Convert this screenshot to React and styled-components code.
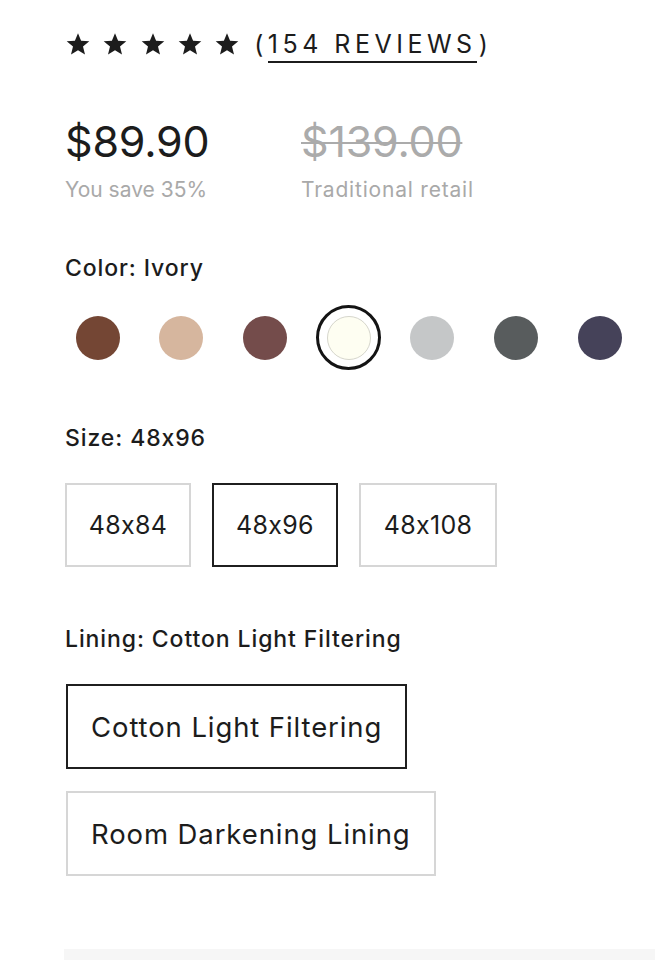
import React from "react";
import styled, { createGlobalStyle } from "styled-components";

const Global = createGlobalStyle`
  html, body { margin: 0; padding: 0; background: #fff; }
  body {
    font-family: "Inter", "Liberation Sans", sans-serif;
    font-feature-settings: "calt" 0;
    color: #1c1c1c;
  }
  * { box-sizing: border-box; }
`;

const Page = styled.div`
  width: 655px;
  height: 960px;
  overflow: hidden;
  padding: 30px 0 0 65px;
  display: flex;
  flex-direction: column;
`;

const RatingRow = styled.div`
  display: flex;
  align-items: flex-start;
`;

const Stars = styled.div`
  display: flex;
  gap: 13.3px;
  margin: 2px 0 0 1px;
`;

const Reviews = styled.div`
  margin: 1.5px 0 0 15px;
  font-size: 25px;
  line-height: 25px;
  letter-spacing: 4.5px;
  color: #1c1c1c;
  display: flex;
  align-items: flex-start;
`;

const ReviewsLink = styled.span`
  display: inline-block;
  border-bottom: 2px solid #1c1c1c;
  padding-bottom: 4.5px;
  margin-right: 2px;
`;

const PriceRow = styled.div`
  display: flex;
  margin-top: 53px;
`;

const PriceCol = styled.div`
  display: flex;
  flex-direction: column;
  width: ${(p) => p.$w}px;
`;

const Price = styled.div`
  font-size: 43px;
  line-height: 50px;
  letter-spacing: -0.2px;
  color: ${(p) => (p.$old ? "#ababab" : "#1c1c1c")};
  text-decoration: ${(p) => (p.$old ? "line-through" : "none")};
  text-decoration-thickness: 2px;
`;

const PriceNote = styled.div`
  font-size: 21px;
  line-height: 24px;
  letter-spacing: ${(p) => p.$ls}px;
  margin-top: 12px;
  color: #a9a9a9;
`;

const Label = styled.div`
  font-size: 23px;
  font-weight: 500;
  line-height: 28px;
  letter-spacing: 0.9px;
  color: #1c1c1c;
  margin-top: ${(p) => p.$mt}px;
`;

const Swatches = styled.div`
  display: flex;
  align-items: center;
  gap: 18.7px;
  margin-top: 23px;
`;

const SwatchRing = styled.div`
  width: 65px;
  height: 65px;
  border-radius: 50%;
  border: 3px solid ${(p) => (p.$selected ? "#141414" : "transparent")};
  display: flex;
  align-items: center;
  justify-content: center;
`;

const SwatchDot = styled.div`
  width: 44px;
  height: 44px;
  border-radius: 50%;
  background: ${(p) => p.$color};
  border: ${(p) => (p.$outlined ? "1px solid #d6d6cc" : "none")};
`;

const OptionRow = styled.div`
  display: flex;
  gap: 21px;
  margin-top: 31px;
`;

const OptionCol = styled.div`
  display: flex;
  flex-direction: column;
  align-items: flex-start;
  gap: 22px;
  margin-top: 31px;
  margin-left: 1px;
`;

const Option = styled.div`
  width: ${(p) => (p.$w ? `${p.$w}px` : "auto")};
  height: ${(p) => p.$h}px;
  padding: 0 ${(p) => p.$px}px;
  border: 2px solid ${(p) => (p.$selected ? "#1f1f1f" : "#d6d6d6")};
  display: flex;
  align-items: center;
  justify-content: center;
  font-size: ${(p) => p.$fs}px;
  letter-spacing: ${(p) => p.$ls}px;
  color: #1c1c1c;
`;

const BottomPanel = styled.div`
  margin-top: auto;
  margin-left: -1px;
  height: 11px;
  background: #f6f6f6;
`;

const Star = () => (
  <svg width="24" height="24" viewBox="0 0 24 24">
    <path
      d="M12 1.2l3.1 7.6 8.2.5-6.3 5.3 2 8-7-4.4-7 4.4 2-8L.7 9.3l8.2-.5z"
      fill="#1c1c1c"
    />
  </svg>
);

const colors = [
  "#744634",
  "#d6b69e",
  "#744c4b",
  "#fefef2",
  "#c5c7c8",
  "#585c5d",
  "#454259",
];

const sizes = [
  { label: "48x84", w: 126 },
  { label: "48x96", w: 126, selected: true },
  { label: "48x108", w: 138 },
];

const linings = [
  { label: "Cotton Light Filtering", selected: true },
  { label: "Room Darkening Lining" },
];

export default function App() {
  return (
    <>
      <Global />
      <Page>
        <RatingRow>
          <Stars>
            {[0, 1, 2, 3, 4].map((i) => (
              <Star key={i} />
            ))}
          </Stars>
          <Reviews>
            (<ReviewsLink>154 REVIEWS</ReviewsLink>)
          </Reviews>
        </RatingRow>

        <PriceRow>
          <PriceCol $w={236}>
            <Price>$89.90</Price>
            <PriceNote $ls={0}>You save 35%</PriceNote>
          </PriceCol>
          <PriceCol $w={220}>
            <Price $old>$139.00</Price>
            <PriceNote $ls={0.8}>Traditional retail</PriceNote>
          </PriceCol>
        </PriceRow>

        <Label $mt={52}>Color: Ivory</Label>
        <Swatches>
          {colors.map((c, i) => (
            <SwatchRing key={c} $selected={i === 3}>
              <SwatchDot $color={c} $outlined={i === 3} />
            </SwatchRing>
          ))}
        </Swatches>

        <Label $mt={54}>Size: 48x96</Label>
        <OptionRow>
          {sizes.map((s) => (
            <Option key={s.label} $w={s.w} $h={84} $px={0} $fs={25} $ls={0.3} $selected={s.selected}>
              {s.label}
            </Option>
          ))}
        </OptionRow>

        <Label $mt={58}>Lining: Cotton Light Filtering</Label>
        <OptionCol>
          {linings.map((l) => (
            <Option key={l.label} $h={85} $px={23} $fs={27.5} $ls={0.9} $selected={l.selected}>
              {l.label}
            </Option>
          ))}
        </OptionCol>

        <BottomPanel />
      </Page>
    </>
  );
}
